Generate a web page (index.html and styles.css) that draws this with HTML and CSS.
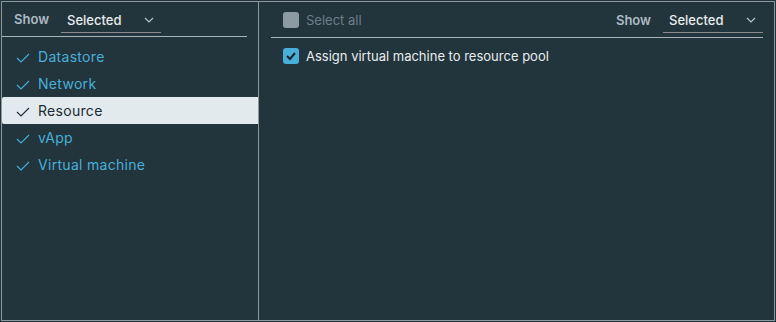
FILE: index.html
```html
<!DOCTYPE html>
<html lang="en">
<head>
    <meta charset="UTF-8">
    <title>Privileges</title>
    <link rel="stylesheet" href="styles.css">
</head>
<body>
    <div class="frame">
        <div class="left-pane">
            <div class="pane-header">
                <span class="show-label">Show</span>
                <div class="select">
                    <span>Selected</span>
                    <svg class="chevron" width="10" height="6" viewBox="0 0 10 6"><path d="M1 1 L5 5 L9 1" fill="none" stroke="currentColor" stroke-width="1.2"/></svg>
                </div>
            </div>
            <ul class="category-list">
                <li class="category"><svg class="tick" width="14" height="10" viewBox="0 0 14 10"><path d="M1 5 L5 9 L13 1" fill="none" stroke="currentColor" stroke-width="1.1"/></svg>Datastore</li>
                <li class="category"><svg class="tick" width="14" height="10" viewBox="0 0 14 10"><path d="M1 5 L5 9 L13 1" fill="none" stroke="currentColor" stroke-width="1.1"/></svg>Network</li>
                <li class="category active"><svg class="tick" width="14" height="10" viewBox="0 0 14 10"><path d="M1 5 L5 9 L13 1" fill="none" stroke="currentColor" stroke-width="1.1"/></svg>Resource</li>
                <li class="category"><svg class="tick" width="14" height="10" viewBox="0 0 14 10"><path d="M1 5 L5 9 L13 1" fill="none" stroke="currentColor" stroke-width="1.1"/></svg>vApp</li>
                <li class="category"><svg class="tick" width="14" height="10" viewBox="0 0 14 10"><path d="M1 5 L5 9 L13 1" fill="none" stroke="currentColor" stroke-width="1.1"/></svg>Virtual machine</li>
            </ul>
        </div>
        <div class="right-pane">
            <div class="pane-header right-header">
                <label class="check disabled"><span class="box"></span>Select all</label>
                <div class="spacer"></div>
                <span class="show-label">Show</span>
                <div class="select">
                    <span>Selected</span>
                    <svg class="chevron" width="10" height="6" viewBox="0 0 10 6"><path d="M1 1 L5 5 L9 1" fill="none" stroke="currentColor" stroke-width="1.2"/></svg>
                </div>
            </div>
            <div class="privilege-list">
                <label class="check checked"><span class="box"><svg width="12" height="10" viewBox="0 0 12 10"><path d="M2 5 L5 8 L10 2" fill="none" stroke="#17242b" stroke-width="2"/></svg></span>Assign virtual machine to resource pool</label>
            </div>
        </div>
    </div>
</body>
</html>
```

FILE: styles.css
```css
:root {
    --bg: #22343c;
    --frame-border: #8e999e;
    --line: #a9b4b9;
    --blue: #49afd9;
    --text: #e9ecef;
    --muted: #adbbc4;
}

html, body {
    margin: 0;
    padding: 0;
    background-color: var(--bg);
    font-family: Inter, "Noto Sans", sans-serif;
    font-size: 13px;
}

.frame {
    margin: 1px;
    width: 772px;
    height: 318px;
    border: 1px solid var(--frame-border);
    display: flex;
}

.left-pane {
    width: 256px;
    border-right: 1px solid var(--frame-border);
}

.right-pane {
    flex: 1;
}

.pane-header {
    height: 34px;
    display: flex;
    align-items: center;
    border-bottom: 1px solid var(--line);
    margin-right: 11px;
    padding-left: 12px;
}

.right-header {
    margin-left: 12px;
    padding-left: 12px;
    height: 35px;
}

.spacer {
    flex: 1;
}

.show-label {
    color: var(--muted);
    font-weight: 600;
    font-size: 13px;
    margin-right: 12px;
}

.select {
    width: 94px;
    height: 24px;
    padding-left: 6px;
    margin-top: 2px;
    display: flex;
    align-items: center;
    border-bottom: 1px solid #8a8a8a;
    color: var(--text);
    font-size: 13px;
    font-weight: 500;
    box-sizing: content-box;
    position: relative;
}

.select .chevron {
    position: absolute;
    right: 7px;
    top: 9px;
    color: #b8c2c8;
}

.category-list {
    list-style: none;
    margin: 0;
    padding: 6px 0 0;
}

.category {
    height: 27px;
    display: flex;
    align-items: center;
    padding-left: 14px;
    color: var(--blue);
    font-size: 14px;
    letter-spacing: 0.3px;
}

.category .tick {
    margin-right: 8px;
    margin-top: 3px;
}

.category.active {
    background-color: #e3eaed;
    color: #1b2a32;
    border-radius: 2px 0 0 2px;
}

.check {
    display: flex;
    align-items: center;
    font-size: 13px;
    color: var(--text);
}

.check .box {
    width: 16px;
    height: 16px;
    border-radius: 3px;
    margin-right: 7px;
    display: flex;
    align-items: center;
    justify-content: center;
}

.check.disabled {
    color: #6e7f88;
}

.check.disabled .box {
    background-color: #8c9aa2;
}

.check.checked .box {
    background-color: var(--blue);
}

.privilege-list {
    padding: 10px 0 0 24px;
}
```
